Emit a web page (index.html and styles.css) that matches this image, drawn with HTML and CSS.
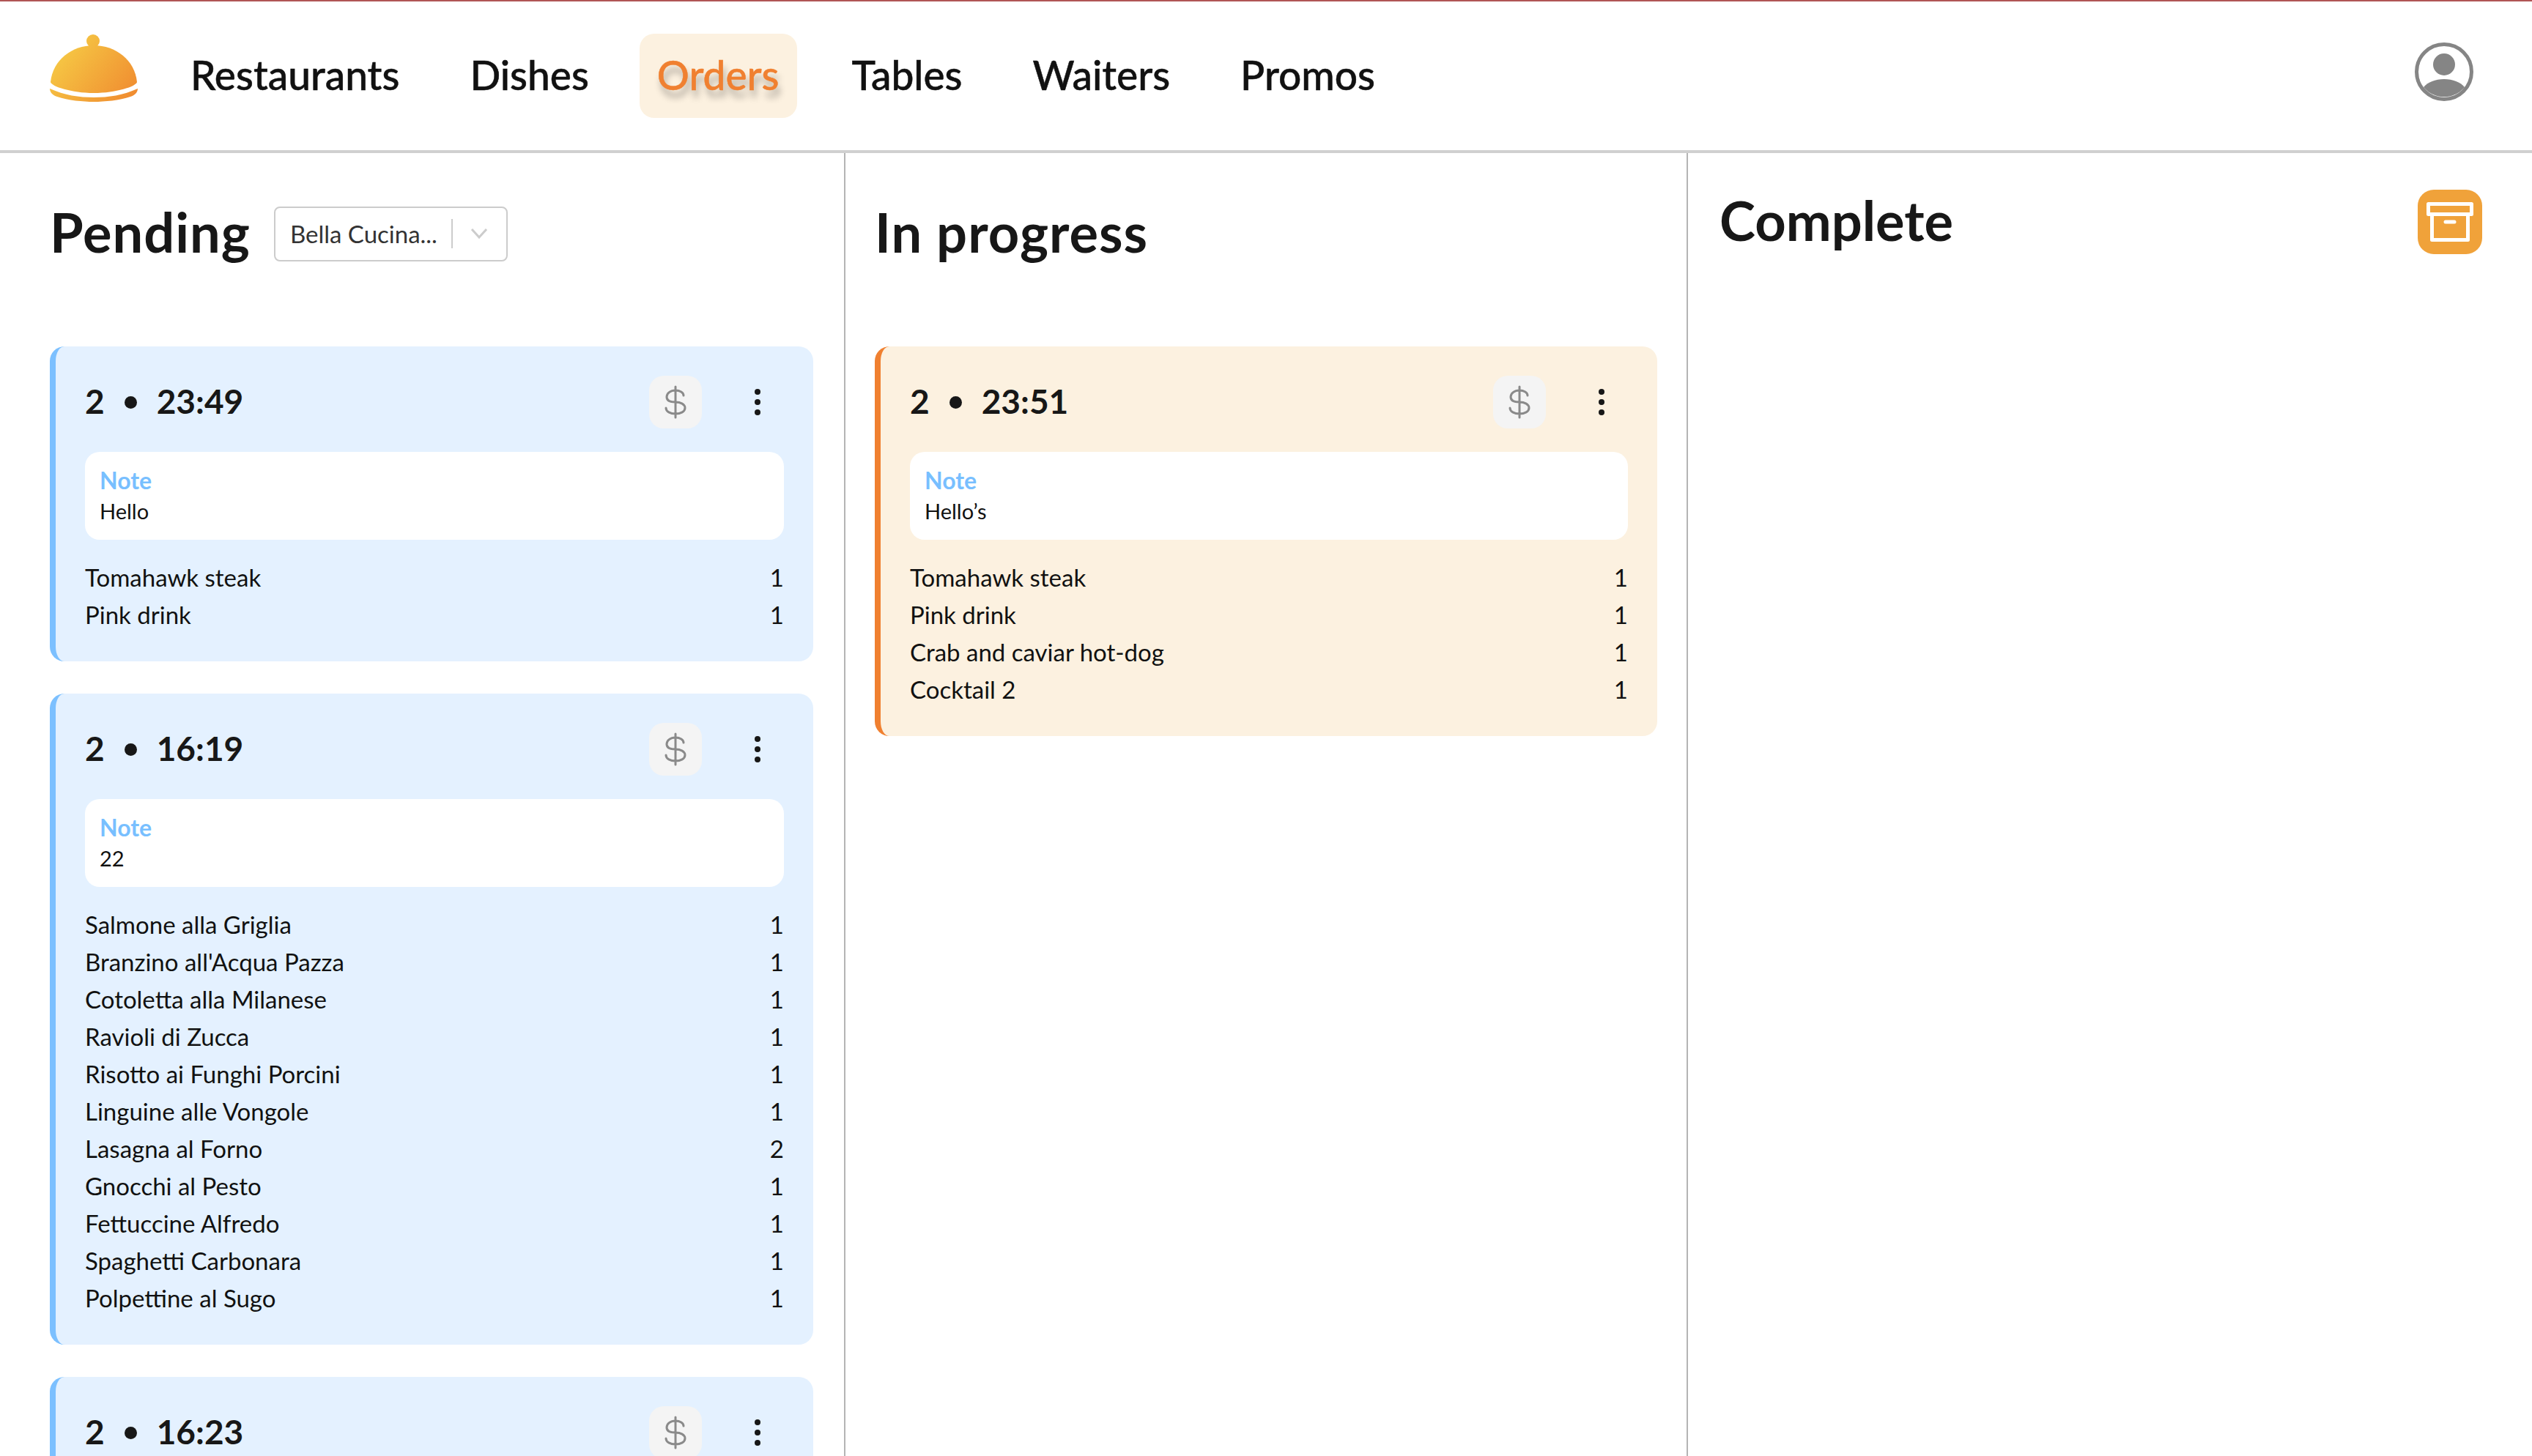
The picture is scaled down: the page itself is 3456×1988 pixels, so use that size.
FILE: index.html
```html
<!DOCTYPE html>
<html lang="en">
<head>
    <meta charset="UTF-8">
    <title>Orders</title>
    <link rel="stylesheet" href="styles.css">
</head>
<body>
    <svg class="defs" width="0" height="0">
        <symbol id="dollar" viewBox="0 0 72 72">
            <path d="M36 15V57M47 27C47 23 42 20 36 20C29 20 24 24 24 29C24 34 29 36 36 36C43 36 49 39 49 44C49 49 43 52 36 52C29 52 23 49 23 44" fill="none" stroke="#8a8a8a" stroke-width="3" stroke-linecap="round"/>
        </symbol>
        <symbol id="dots" viewBox="0 0 72 72">
            <circle cx="36" cy="22" r="4"/>
            <circle cx="36" cy="36" r="4"/>
            <circle cx="36" cy="50" r="4"/>
        </symbol>
    </svg>

    <header class="topbar">
        <svg class="logo" width="120" height="94" viewBox="0 0 120 94">
            <defs>
                <linearGradient id="dome" gradientUnits="userSpaceOnUse" x1="15" y1="15" x2="110" y2="90">
                    <stop offset="0" stop-color="#f6ca45"/>
                    <stop offset="1" stop-color="#f08c30"/>
                </linearGradient>
            </defs>
            <circle cx="59" cy="10" r="9" fill="url(#dome)"/>
            <path d="M1 66C4 36 30 16 60 16C90 16 116 36 119 66C118 72 90 81 60 81C30 81 2 72 1 66Z" fill="url(#dome)"/>
            <path d="M0 75C20 84 40 87 60 87C80 87 100 84 120 75C120 80 116 84 110 86C95 91 75 93 60 93C45 93 25 91 10 86C4 84 0 80 0 75Z" fill="url(#dome)"/>
        </svg>
        <nav class="nav">
            <a class="nav-item">Restaurants</a>
            <a class="nav-item">Dishes</a>
            <a class="nav-item active">Orders</a>
            <a class="nav-item">Tables</a>
            <a class="nav-item">Waiters</a>
            <a class="nav-item">Promos</a>
        </nav>
        <svg class="profile" width="80" height="80" viewBox="0 0 80 80">
            <circle cx="40" cy="40" r="37.5" fill="none" stroke="#858585" stroke-width="5"/>
            <circle cx="40" cy="30" r="15" fill="#858585"/>
            <path d="M12 61C18 54 28 50 40 50C52 50 62 54 68 61A36 36 0 0 1 12 61Z" fill="#858585"/>
        </svg>
    </header>

    <main class="board">
        <section class="column first">
            <div class="column-head">
                <h1>Pending</h1>
                <div class="select">
                    <span class="select-value">Bella Cucina...</span>
                    <span class="select-sep"></span>
                    <svg width="24" height="14" viewBox="0 0 24 14"><path d="M2 1L12 12L22 1" fill="none" stroke="#ccc" stroke-width="3"/></svg>
                </div>
            </div>

            <article class="card">
                <div class="card-head">
                    <div class="card-title"><span>2</span><i class="dot"></i><span>23:49</span></div>
                    <button class="pay"><svg width="72" height="72"><use href="#dollar"/></svg></button>
                    <button class="more"><svg width="72" height="72"><use href="#dots"/></svg></button>
                </div>
                <div class="note">
                    <div class="note-label">Note</div>
                    <div class="note-text">Hello</div>
                </div>
                <ul class="items">
                    <li><span>Tomahawk steak</span><span>1</span></li>
                    <li><span>Pink drink</span><span>1</span></li>
                </ul>
            </article>

            <article class="card">
                <div class="card-head">
                    <div class="card-title"><span>2</span><i class="dot"></i><span>16:19</span></div>
                    <button class="pay"><svg width="72" height="72"><use href="#dollar"/></svg></button>
                    <button class="more"><svg width="72" height="72"><use href="#dots"/></svg></button>
                </div>
                <div class="note">
                    <div class="note-label">Note</div>
                    <div class="note-text">22</div>
                </div>
                <ul class="items">
                    <li><span>Salmone alla Griglia</span><span>1</span></li>
                    <li><span>Branzino all'Acqua Pazza</span><span>1</span></li>
                    <li><span>Cotoletta alla Milanese</span><span>1</span></li>
                    <li><span>Ravioli di Zucca</span><span>1</span></li>
                    <li><span>Risotto ai Funghi Porcini</span><span>1</span></li>
                    <li><span>Linguine alle Vongole</span><span>1</span></li>
                    <li><span>Lasagna al Forno</span><span>2</span></li>
                    <li><span>Gnocchi al Pesto</span><span>1</span></li>
                    <li><span>Fettuccine Alfredo</span><span>1</span></li>
                    <li><span>Spaghetti Carbonara</span><span>1</span></li>
                    <li><span>Polpettine al Sugo</span><span>1</span></li>
                </ul>
            </article>

            <article class="card">
                <div class="card-head">
                    <div class="card-title"><span>2</span><i class="dot"></i><span>16:23</span></div>
                    <button class="pay"><svg width="72" height="72"><use href="#dollar"/></svg></button>
                    <button class="more"><svg width="72" height="72"><use href="#dots"/></svg></button>
                </div>
            </article>
        </section>

        <section class="column">
            <div class="column-head">
                <h1>In progress</h1>
            </div>
            <article class="card progress">
                <div class="card-head">
                    <div class="card-title"><span>2</span><i class="dot"></i><span>23:51</span></div>
                    <button class="pay"><svg width="72" height="72"><use href="#dollar"/></svg></button>
                    <button class="more"><svg width="72" height="72"><use href="#dots"/></svg></button>
                </div>
                <div class="note">
                    <div class="note-label">Note</div>
                    <div class="note-text">Hello’s</div>
                </div>
                <ul class="items">
                    <li><span>Tomahawk steak</span><span>1</span></li>
                    <li><span>Pink drink</span><span>1</span></li>
                    <li><span>Crab and caviar hot-dog</span><span>1</span></li>
                    <li><span>Cocktail 2</span><span>1</span></li>
                </ul>
            </article>
        </section>

        <section class="column last">
            <div class="column-head">
                <h1>Complete</h1>
                <button class="archive">
                    <svg width="88" height="88" viewBox="0 0 88 88" fill="none" stroke="#fff" stroke-width="5" stroke-linejoin="round">
                        <rect x="14.5" y="19.5" width="59" height="14"/>
                        <path d="M19.5 34V68.5H68.5V34"/>
                        <path d="M38 44H50" stroke-linecap="round"/>
                    </svg>
                </button>
            </div>
        </section>
    </main>
</body>
</html>
```

FILE: styles.css
```css
*{
    margin: 0;
    padding: 0;
    box-sizing: border-box;
}
html, body{
    height: 100%;
    overflow: hidden;
}
body{
    font-family: 'Lato', 'Noto Sans', sans-serif;
    color: #171717;
    background-color: #fff;
}
.defs{
    position: absolute;
}
.topbar{
    display: flex;
    align-items: flex-start;
    height: 209px;
    padding: 44px 80px 0 68px;
    border-top: 2px solid #b05555;
    border-bottom: 4px solid #d0d0d0;
}
.logo{
    flex: none;
}
.nav{
    display: flex;
    gap: 44px;
    margin-left: 46px;
}
.nav-item{
    display: flex;
    align-items: center;
    height: 115px;
    padding: 0 26px 4px;
    border-radius: 20px;
    font-size: 55px;
    font-weight: 500;
    color: #111;
    -webkit-text-stroke: 0.5px;
}
.nav-item.active{
    margin: 0 5px 0 -1px;
    padding: 0 24px 4px;
    color: #f08030;
    background-color: #fcf1e0;
    text-shadow: 3px 10px 10px rgba(0, 0, 0, 0.3);
}
.profile{
    margin-left: auto;
    margin-top: 12px;
}
.board{
    display: grid;
    grid-template-columns: 1154px 1150px 1152px;
    height: 1779px;
    overflow: hidden;
}
.column{
    padding: 64px 40px 0 40px;
    border-right: 2px solid #b4b4b4;
}
.column.first{
    padding-left: 68px;
    padding-right: 42px;
}
.column.last{
    padding: 50px 68px 0 43px;
    border-right: none;
}
.column-head{
    display: flex;
    align-items: center;
    gap: 32px;
    height: 92px;
    margin-bottom: 108px;
}
.column.last .column-head{
    justify-content: space-between;
    height: 88px;
}
h1{
    padding-bottom: 5px;
    font-size: 74px;
    font-weight: 700;
    letter-spacing: 1px;
}
.column.last h1{
    letter-spacing: 0;
}
.select{
    display: flex;
    align-items: center;
    width: 319px;
    height: 75px;
    padding: 0 25px 1px 20px;
    border: 2px solid #ccc;
    border-radius: 8px;
    color: #333;
    font-size: 33px;
}
.select-value{
    flex: 1;
    white-space: nowrap;
}
.select-sep{
    width: 2px;
    height: 40px;
    margin-right: 24px;
    background-color: #ccc;
}
.card{
    padding: 40px 40px 38px;
    margin-bottom: 44px;
    border-left: 8px solid #7cc0ff;
    border-radius: 20px;
    background-color: #e4f1ff;
}
.card.progress{
    border-left-color: #f08030;
    background-color: #fcf1e0;
}
.card-head{
    display: flex;
    align-items: center;
    gap: 40px;
    margin-bottom: 32px;
}
.card-title{
    display: flex;
    align-items: center;
    flex: 1;
    padding-bottom: 4px;
    font-size: 46px;
    font-weight: 700;
}
.dot{
    width: 17px;
    height: 17px;
    margin: 4px 27px 0;
    border-radius: 50%;
    background-color: #171717;
}
.pay, .more{
    width: 72px;
    height: 72px;
    border: none;
    background: none;
}
.pay{
    border-radius: 20px;
    background-color: #f4f4f4;
}
.more{
    fill: #171717;
}
.note{
    height: 120px;
    padding: 18px 20px 0;
    border-radius: 20px;
    background-color: #fff;
    color: #111;
}
.note-label{
    font-size: 32px;
    line-height: 42px;
    font-weight: 700;
    color: #78bfff;
}
.note-text{
    font-size: 29px;
    line-height: 42px;
}
.items{
    margin-top: 26px;
    list-style: none;
}
.items li{
    display: flex;
    justify-content: space-between;
    font-size: 33px;
    line-height: 51px;
    color: #111;
}
.archive{
    width: 88px;
    height: 88px;
    border: none;
    border-radius: 22px;
    background-color: #f0a23a;
}
```
